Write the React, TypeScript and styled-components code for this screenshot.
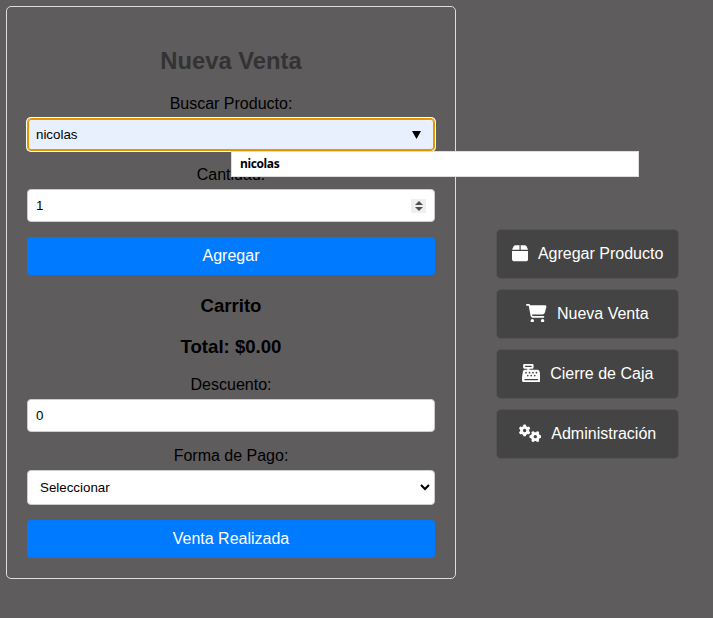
import React from "react";
import styled, { createGlobalStyle } from "styled-components";
import { FaBox, FaCartShopping, FaCashRegister, FaGears } from "react-icons/fa6";

const GlobalStyle = createGlobalStyle`
  * { box-sizing: border-box; }
  body {
    margin: 0;
    background: #5f5c5d;
    color: #000;
    font-family: "Liberation Sans", Arial, sans-serif;
    font-size: 16px;
    overflow: hidden;
  }
`;

const Page = styled.div`
  display: flex;
  align-items: flex-start;
  height: 618px;
  padding: 6px;
`;

const Panel = styled.main`
  width: 450px;
  height: 573px;
  flex: none;
  padding: 20px;
  border: 1px solid #ddd;
  border-radius: 5px;
  text-align: center;
`;

const Title = styled.h2`
  margin: 20px 0;
  font-size: 23.8px;
  line-height: 28px;
  color: #333;
`;

const Heading = styled.h3`
  margin: 19px 0;
  padding-top: 1px;
  font-size: 18.6px;
  line-height: 21px;
`;

const Label = styled.label`
  display: block;
  margin-bottom: 5px;
  line-height: 18px;
`;

const Field = styled.div<{ $active?: boolean; $tall?: boolean }>`
  position: relative;
  display: flex;
  align-items: center;
  justify-content: space-between;
  height: ${(p) => (p.$tall ? 35 : 33)}px;
  margin-bottom: 15px;
  padding: 0 ${(p) => (p.$tall ? 4 : 8)}px 0 ${(p) => (p.$tall ? 12 : 8)}px;
  border: 1px solid ${(p) => (p.$active ? "#e59700" : "#ccc")};
  border-radius: 4px;
  background: ${(p) => (p.$active ? "#e8f0fe" : "#fff")};
  box-shadow: ${(p) => (p.$active ? "inset 0 0 0 1px #e59700, 0 0 0 1px #fff" : "none")};
  font-size: 13.333px;
  text-align: left;
`;

const Spinner = styled.span`
  display: flex;
  align-items: center;
  justify-content: center;
  width: 15px;
  height: 14px;
  background: #efefef;
`;

const Suggestions = styled.div`
  position: absolute;
  top: 32px;
  left: 203px;
  z-index: 2;
  width: 408px;
  height: 26px;
  padding-left: 8px;
  border: 1px solid #ddd;
  background: #fff;
  font: bold 12px/24px "Open Sans", "Noto Sans", sans-serif;
  letter-spacing: -0.4px;
`;

const Submit = styled.button`
  display: block;
  width: 100%;
  height: 38px;
  padding: 0;
  border: 0;
  border-radius: 4px;
  background: #007bff;
  color: #fff;
  font: 16px "Liberation Sans", Arial, sans-serif;
`;

const Menu = styled.nav`
  display: flex;
  flex-direction: column;
  gap: 10px;
  width: 183px;
  margin: 223px 0 0 40px;
`;

const MenuButton = styled.button<{ $iconWidth: number }>`
  display: flex;
  align-items: center;
  justify-content: center;
  gap: 10px;
  height: 50px;
  padding: 0;
  border: 1px solid #555354;
  border-radius: 5px;
  background: #444;
  color: #fff;
  font: 16px "Liberation Sans", Arial, sans-serif;
  white-space: nowrap;

  svg {
    flex: none;
    width: ${(p) => p.$iconWidth}px;
    height: 18.5px;
    margin-bottom: 2px;
  }
`;

const actions = [
  { label: "Agregar Producto", icon: <FaBox />, width: 16.2 },
  { label: "Nueva Venta", icon: <FaCartShopping />, width: 20.6 },
  { label: "Cierre de Caja", icon: <FaCashRegister />, width: 18.5 },
  { label: "Administración", icon: <FaGears />, width: 22.5 },
];

export default function App() {
  return (
    <>
      <GlobalStyle />
      <Page>
        <Panel>
          <Title>Nueva Venta</Title>
          <Label>Buscar Producto:</Label>
          <Field $active>
            <span>nicolas</span>
            <svg width="18" height="8" viewBox="0 0 18 8">
              <path d="M4 0H13L8.5 8Z" />
            </svg>
            <Suggestions>nicolas</Suggestions>
          </Field>
          <Label>Cantidad:</Label>
          <Field>
            <span>1</span>
            <Spinner>
              <svg width="8" height="10" viewBox="0 0 8 10" fill="#505050">
                <path d="M0 4L4 0L8 4ZM0 6H8L4 10Z" />
              </svg>
            </Spinner>
          </Field>
          <Submit>Agregar</Submit>
          <Heading>Carrito</Heading>
          <Heading>Total: $0.00</Heading>
          <Label>Descuento:</Label>
          <Field>
            <span>0</span>
          </Field>
          <Label>Forma de Pago:</Label>
          <Field $tall>
            <span>Seleccionar</span>
            <svg width="10" height="7" viewBox="0 0 10 7" fill="none" stroke="#000" strokeWidth="2">
              <path d="M1 1L5 5L9 1" />
            </svg>
          </Field>
          <Submit>Venta Realizada</Submit>
        </Panel>
        <Menu>
          {actions.map((a) => (
            <MenuButton key={a.label} $iconWidth={a.width}>
              {a.icon}
              <span>{a.label}</span>
            </MenuButton>
          ))}
        </Menu>
      </Page>
    </>
  );
}
